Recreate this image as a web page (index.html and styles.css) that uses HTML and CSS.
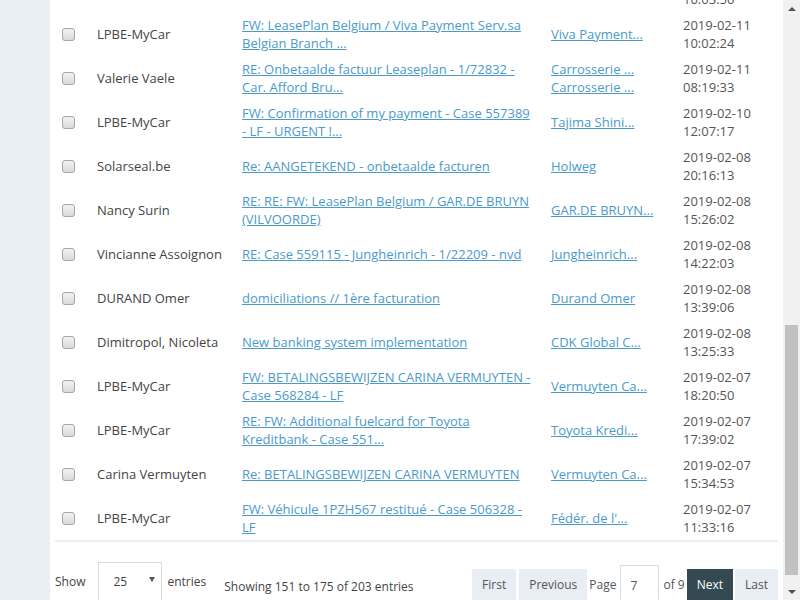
FILE: index.html
```html
<!DOCTYPE html>
<html>
<head>
<meta charset="utf-8">
<link rel="stylesheet" href="styles.css">
</head>
<body>
<div class="app">
  <aside class="sidebar"></aside>
  <main class="main">
    <table class="mail-table">
      <colgroup>
        <col class="c-check"><col class="c-from"><col class="c-subject"><col class="c-company"><col class="c-date">
      </colgroup>
      <tbody>
        <tr><td></td><td class="from"></td><td></td><td class="company"></td><td class="date">2019-02-11 10:03:50</td></tr>
        <tr><td><input type="checkbox" class="cb"></td><td class="from">LPBE-MyCar</td><td><a href="#">FW: LeasePlan Belgium / Viva Payment Serv.sa Belgian Branch ...</a></td><td class="company"><a href="#">Viva Payment...</a></td><td class="date">2019-02-11 10:02:24</td></tr>
        <tr><td><input type="checkbox" class="cb"></td><td class="from">Valerie Vaele</td><td><a href="#">RE: Onbetaalde factuur Leaseplan - 1/72832 - Car. Afford Bru...</a></td><td class="company"><a href="#">Carrosserie ...</a><br><a href="#">Carrosserie ...</a></td><td class="date">2019-02-11 08:19:33</td></tr>
        <tr><td><input type="checkbox" class="cb"></td><td class="from">LPBE-MyCar</td><td><a href="#">FW: Confirmation of my payment - Case 557389 - LF - URGENT !...</a></td><td class="company"><a href="#">Tajima Shini...</a></td><td class="date">2019-02-10 12:07:17</td></tr>
        <tr><td><input type="checkbox" class="cb"></td><td class="from">Solarseal.be</td><td><a href="#">Re: AANGETEKEND - onbetaalde facturen</a></td><td class="company"><a href="#">Holweg</a></td><td class="date">2019-02-08 20:16:13</td></tr>
        <tr><td><input type="checkbox" class="cb"></td><td class="from">Nancy Surin</td><td><a href="#">RE: RE: FW: LeasePlan Belgium / GAR.DE BRUYN (VILVOORDE)</a></td><td class="company"><a href="#">GAR.DE BRUYN...</a></td><td class="date">2019-02-08 15:26:02</td></tr>
        <tr><td><input type="checkbox" class="cb"></td><td class="from">Vincianne Assoignon</td><td><a href="#">RE: Case 559115 - Jungheinrich - 1/22209 - nvd</a></td><td class="company"><a href="#">Jungheinrich...</a></td><td class="date">2019-02-08 14:22:03</td></tr>
        <tr><td><input type="checkbox" class="cb"></td><td class="from">DURAND Omer</td><td><a href="#">domiciliations // 1ère facturation</a></td><td class="company"><a href="#">Durand Omer</a></td><td class="date">2019-02-08 13:39:06</td></tr>
        <tr><td><input type="checkbox" class="cb"></td><td class="from">Dimitropol, Nicoleta</td><td><a href="#">New banking system implementation</a></td><td class="company"><a href="#">CDK Global C...</a></td><td class="date">2019-02-08 13:25:33</td></tr>
        <tr><td><input type="checkbox" class="cb"></td><td class="from">LPBE-MyCar</td><td><a href="#">FW: BETALINGSBEWIJZEN CARINA VERMUYTEN - Case 568284 - LF</a></td><td class="company"><a href="#">Vermuyten Ca...</a></td><td class="date">2019-02-07 18:20:50</td></tr>
        <tr><td><input type="checkbox" class="cb"></td><td class="from">LPBE-MyCar</td><td><a href="#">RE: FW: Additional fuelcard for Toyota Kreditbank - Case 551...</a></td><td class="company"><a href="#">Toyota Kredi...</a></td><td class="date">2019-02-07 17:39:02</td></tr>
        <tr><td><input type="checkbox" class="cb"></td><td class="from">Carina Vermuyten</td><td><a href="#">Re: BETALINGSBEWIJZEN CARINA VERMUYTEN</a></td><td class="company"><a href="#">Vermuyten Ca...</a></td><td class="date">2019-02-07 15:34:53</td></tr>
        <tr><td><input type="checkbox" class="cb"></td><td class="from">LPBE-MyCar</td><td><a href="#">FW: Véhicule 1PZH567 restitué - Case 506328 - LF</a></td><td class="company"><a href="#">Fédér. de l'...</a></td><td class="date">2019-02-07 11:33:16</td></tr>
      </tbody>
    </table>
    <div class="footer">
      <div class="length">
        <span>Show</span>
        <div class="select"><span>25</span><i class="caret"></i></div>
        <span>entries</span>
      </div>
      <div class="info">Showing 151 to 175 of 203 entries</div>
      <div class="pager">
        <button class="btn">First</button>
        <button class="btn btn-gap">Previous</button>
        <span class="label label-page">Page</span>
        <input class="page-input" value="7">
        <span class="label">of 9</span>
        <button class="btn btn-dark">Next</button>
        <button class="btn">Last</button>
      </div>
    </div>
  </main>
  <div class="scrollbar">
    <div class="sb-btn"><i class="arrow-up"></i></div>
    <div class="sb-track"><div class="sb-thumb"></div></div>
    <div class="sb-btn"><i class="arrow-down"></i></div>
  </div>
</div>
</body>
</html>
```
FILE: styles.css
```css
html, body {
  margin: 0;
  padding: 0;
  height: 600px;
  overflow: hidden;
}
body {
  font-family: "Open Sans", "DejaVu Sans", sans-serif;
  font-size: 13px;
  line-height: 18px;
  color: #444;
}
.app {
  display: flex;
  height: 600px;
}
.sidebar {
  width: 50px;
  flex: none;
  background: #e9edf4;
}
.main {
  flex: 1;
  background: #fff;
  padding: 0 5px;
  overflow: hidden;
}
.mail-table {
  width: 100%;
  table-layout: fixed;
  border-collapse: collapse;
  margin-top: -32px;
  border-bottom: 2px solid #e9edf4;
}
.c-check { width: 34px; }
.c-from { width: 145px; }
.c-subject { width: 309px; }
.c-company { width: 132px; }
.c-date { width: 103px; }
.mail-table td {
  padding: 4px 8px;
  height: 36px;
  vertical-align: middle;
}
.mail-table a {
  color: #4a9acb;
  text-decoration: underline;
}
.from, .company { white-space: nowrap; }
.date { color: #555; }
.cb {
  appearance: none;
  -webkit-appearance: none;
  display: block;
  margin: 0 0 0 -1px;
  width: 13px;
  height: 13px;
  box-sizing: border-box;
  border: 1px solid #a6a6a6;
  border-radius: 3px;
  background: linear-gradient(#f2f2f2, #dadada);
}
.footer {
  display: flex;
  align-items: flex-start;
  margin-top: 20px;
  font-size: 12px;
}
.length {
  display: flex;
  align-items: center;
  height: 40px;
}
.select {
  display: flex;
  align-items: center;
  box-sizing: border-box;
  width: 64px;
  height: 40px;
  margin: 0 5px 0 13px;
  padding: 0 6px 0 14px;
  border: 1px solid #dcdcdc;
  background: #fff;
}
.select span { flex: 1; }
.caret {
  width: 0;
  height: 0;
  border-left: 3px solid transparent;
  border-right: 3px solid transparent;
  border-top: 5px solid #555;
  margin-top: -6px;
}
.info {
  margin: 16px 0 0 18px;
}
.pager {
  margin: 3px 0 0 auto;
  display: flex;
  align-items: center;
}
.btn {
  font: inherit;
  height: 32px;
  border: 0;
  margin: 0 0 0 2px;
  padding: 0 10px;
  background: #e9edf4;
  color: #555;
}
.btn:first-child { margin-left: 0; }
.btn-gap { margin-left: 3px; }
.btn-dark {
  background: #334a52;
  color: #fff;
}
.label { color: #555; }
.label-page { margin-left: 2px; }
.page-input {
  font: inherit;
  color: #555;
  box-sizing: border-box;
  width: 39px;
  height: 40px;
  margin: 0 4px;
  padding: 0 0 0 9px;
  border: 1px solid #dcdcdc;
  outline: none;
}
.scrollbar {
  width: 17px;
  flex: none;
  background: #f1f1f1;
  display: flex;
  flex-direction: column;
}
.sb-btn {
  height: 17px;
  display: flex;
  align-items: center;
  justify-content: center;
}
.arrow-up {
  width: 0; height: 0;
  border-left: 4px solid transparent;
  border-right: 4px solid transparent;
  border-bottom: 4px solid #505050;
}
.arrow-down {
  width: 0; height: 0;
  border-left: 4px solid transparent;
  border-right: 4px solid transparent;
  border-top: 4px solid #505050;
}
.sb-track {
  flex: 1;
  padding-top: 308px;
}
.sb-thumb {
  height: 250px;
  margin: 0 2px;
  background: #c1c1c1;
}
```
